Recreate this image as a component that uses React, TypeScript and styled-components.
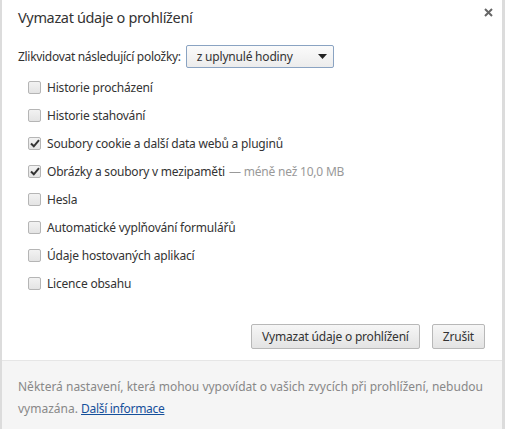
import React from "react";
import styled, { createGlobalStyle } from "styled-components";

const Global = createGlobalStyle`
  html, body { margin: 0; padding: 0; background: #fff; }
  body { font-family: "Noto Sans", "Open Sans", sans-serif; font-size: 12px; color: #333; }
  * { box-sizing: border-box; }
`;

const Dialog = styled.div`
  width: 505px;
  height: 429px;
  display: flex;
  flex-direction: column;
  background: #fff;
  border-left: 2px solid #dcdcdc;
  border-right: 3px solid #dcdcdc;
  position: relative;
`;

const Body = styled.div`
  flex: 1;
  display: flex;
  flex-direction: column;
  padding: 7px 0 0 16px;
  letter-spacing: -0.2px;
`;

const Title = styled.h1`
  margin: 0;
  font-size: 14.5px;
  font-weight: normal;
  letter-spacing: -0.35px;
  color: #333;
  line-height: 20px;
`;

const Close = styled.button`
  position: absolute;
  top: 5px;
  right: 7px;
  border: none;
  background: none;
  padding: 0;
  width: 14px;
  height: 14px;
  display: flex;
  align-items: center;
  justify-content: center;
`;

const RangeRow = styled.div`
  display: flex;
  align-items: center;
  gap: 5px;
  margin-top: 18px;
  height: 23px;
`;

const RangeLabel = styled.span`
  letter-spacing: -0.3px;
`;

const Select = styled.div`
  width: 148px;
  height: 23px;
  border: 1px solid #8aa3c2;
  border-radius: 2px;
  background: linear-gradient(#fbfbfb, #ececec);
  display: flex;
  align-items: center;
  justify-content: space-between;
  padding: 0 6px 0 10px;
  color: #333;
`;

const List = styled.div`
  display: flex;
  flex-direction: column;
  margin-top: 5px;
  padding-left: 10px;
`;

const Item = styled.label`
  display: flex;
  align-items: center;
  height: 28px;
  gap: 6px;
`;

const Box = styled.span`
  width: 13px;
  height: 13px;
  border: 1px solid #b5b5b5;
  border-radius: 2px;
  background: linear-gradient(#f2f2f2, #e4e4e4);
  display: flex;
  align-items: center;
  justify-content: center;
`;

const Note = styled.span`
  color: #999;
  margin-left: 4px;
`;

const Buttons = styled.div`
  display: flex;
  justify-content: flex-end;
  gap: 12px;
  margin-top: 27px;
  padding-right: 17px;
`;

const Button = styled.button<{ $pad: number }>`
  height: 25px;
  font-family: inherit;
  font-size: 12px;
  letter-spacing: -0.2px;
  color: #333;
  border: 1px solid #b8b8b8;
  border-radius: 2px;
  background: linear-gradient(#f6f6f6, #e3e3e3);
  padding: 0 ${(p) => p.$pad}px;
`;

const Footer = styled.div`
  height: 69px;
  background: #f5f5f5;
  border-top: 1px solid #e6e6e6;
  padding: 15px 16px 0 16px;
  color: #888;
  line-height: 22px;
`;

const Link = styled.a`
  color: #15509b;
  text-decoration: underline;
  letter-spacing: -0.3px;
`;

const Check = () => (
  <svg width="10" height="9" viewBox="0 0 10 9">
    <path d="M1 4.5 L3.8 7.3 L9 1.2" fill="none" stroke="#333" strokeWidth="2" />
  </svg>
);

const items: { label: string; checked?: boolean; note?: string }[] = [
  { label: "Historie procházení" },
  { label: "Historie stahování" },
  { label: "Soubory cookie a další data webů a pluginů", checked: true },
  { label: "Obrázky a soubory v mezipaměti", checked: true, note: "— méně než 10,0 MB" },
  { label: "Hesla" },
  { label: "Automatické vyplňování formulářů" },
  { label: "Údaje hostovaných aplikací" },
  { label: "Licence obsahu" },
];

export default function App() {
  return (
    <>
      <Global />
      <Dialog>
        <Close aria-label="Zavřít">
          <svg width="9" height="9" viewBox="0 0 9 9">
            <path d="M1 1 L8 8 M8 1 L1 8" stroke="#666" strokeWidth="2" />
          </svg>
        </Close>
        <Body>
          <Title>Vymazat údaje o prohlížení</Title>
          <RangeRow>
            <RangeLabel>Zlikvidovat následující položky:</RangeLabel>
            <Select>
              <span>z uplynulé hodiny</span>
              <svg width="9" height="5" viewBox="0 0 9 5">
                <path d="M0 0 H9 L4.5 5 Z" fill="#222" />
              </svg>
            </Select>
          </RangeRow>
          <List>
            {items.map((it) => (
              <Item key={it.label}>
                <Box>{it.checked && <Check />}</Box>
                <span>
                  {it.label}
                  {it.note && <Note>{it.note}</Note>}
                </span>
              </Item>
            ))}
          </List>
          <Buttons>
            <Button $pad={10}>Vymazat údaje o prohlížení</Button>
            <Button $pad={10}>Zrušit</Button>
          </Buttons>
        </Body>
        <Footer>
          Některá nastavení, která mohou vypovídat o vašich zvycích při prohlížení, nebudou
          vymazána. <Link href="#">Další informace</Link>
        </Footer>
      </Dialog>
    </>
  );
}
